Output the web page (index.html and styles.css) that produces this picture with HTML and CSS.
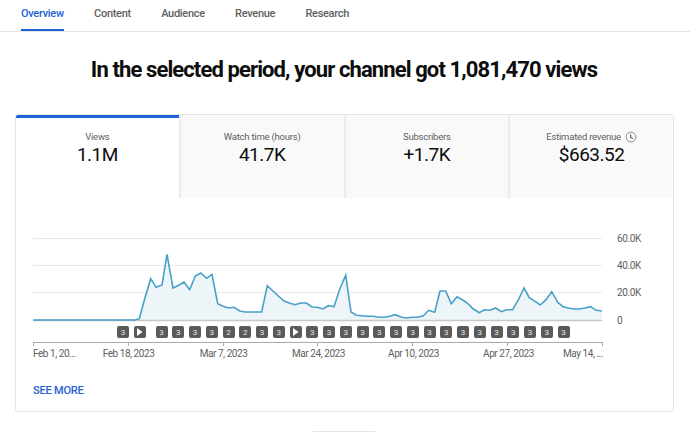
FILE: index.html
```html
<!DOCTYPE html>
<html lang="en">
<head>
  <meta charset="UTF-8" />
  <title>Channel analytics</title>
  <link rel="stylesheet" href="styles.css">
</head>
<body>
  <nav class="top-tabs">
    <a class="top-tab active">Overview</a>
    <a class="top-tab">Content</a>
    <a class="top-tab">Audience</a>
    <a class="top-tab">Revenue</a>
    <a class="top-tab">Research</a>
  </nav>

  <h1 class="headline">In the selected period, your channel got 1,081,470 views</h1>

  <section class="card">
    <div class="metrics">
      <div class="metric active">
        <div class="metric-label">Views</div>
        <div class="metric-value">1.1M</div>
      </div>
      <div class="metric">
        <div class="metric-label">Watch time (hours)</div>
        <div class="metric-value">41.7K</div>
      </div>
      <div class="metric">
        <div class="metric-label">Subscribers</div>
        <div class="metric-value">+1.7K</div>
      </div>
      <div class="metric">
        <div class="metric-label">Estimated revenue
          <svg class="clock" width="12" height="12" viewBox="0 0 12 12">
            <circle cx="6" cy="6" r="4.9" fill="none" stroke="#909090" stroke-width="1"/>
            <path d="M5.6 3.2V6.3L7.8 7.9" fill="none" stroke="#606060" stroke-width="1.1"/>
          </svg>
        </div>
        <div class="metric-value">$663.52</div>
      </div>
    </div>

    <div class="chart">
      <svg class="plot" width="625" height="93" viewBox="33 232 625 93">
        <path class="grid" d="M33 238.5H602M33 265.5H602M33 292.5H602"/>
        <path class="area" d="M33.3 320L135 320 139.3 318.7 145 297.7 150.7 278.7 156 287.3 162 285 167 254.3 173 288 178.7 285.3 184 282 189.7 289.7 195.3 276 200.7 273 206.7 278.3 212 274.3 217.7 303.7 223 306.3 228.7 308 234 307.3 239.7 311 245.3 312 261.7 312 267.3 285.7 273 291 278.3 296 284 301 289.3 303 295 304.7 300.7 303 306.3 303 312 307 317.3 307.3 323 309 328.3 305.7 334 306.7 339.7 289.3 345.7 275.3 351 312 356.3 315.3 362 315.7 367.7 316.3 373.3 316.3 379 317.3 384.3 317.3 389.7 316.3 395 314.7 401 317 406.3 318 412 317.3 417.7 317.3 423.3 315.7 428.7 310.3 434.7 312.3 440 291 445.7 291 451.3 303.7 457 296.7 462.7 300 467.3 303 473.3 309 479.3 312.7 484.3 309.7 490 310.3 495.7 308 501.3 311.7 506.7 309.7 512.7 309.7 518.3 300 524 288 529.3 297.7 535 301.3 540.3 305 546 299.7 551.7 291.7 557.7 302.3 563 306.7 568.3 308 574 309 579.3 309 585 308 590.7 306.7 596 310.3 602 311V320Z"/>
        <path class="baseline" d="M33 320.5H602"/>
        <path class="line" d="M33.3 320L135 320 139.3 318.7 145 297.7 150.7 278.7 156 287.3 162 285 167 254.3 173 288 178.7 285.3 184 282 189.7 289.7 195.3 276 200.7 273 206.7 278.3 212 274.3 217.7 303.7 223 306.3 228.7 308 234 307.3 239.7 311 245.3 312 261.7 312 267.3 285.7 273 291 278.3 296 284 301 289.3 303 295 304.7 300.7 303 306.3 303 312 307 317.3 307.3 323 309 328.3 305.7 334 306.7 339.7 289.3 345.7 275.3 351 312 356.3 315.3 362 315.7 367.7 316.3 373.3 316.3 379 317.3 384.3 317.3 389.7 316.3 395 314.7 401 317 406.3 318 412 317.3 417.7 317.3 423.3 315.7 428.7 310.3 434.7 312.3 440 291 445.7 291 451.3 303.7 457 296.7 462.7 300 467.3 303 473.3 309 479.3 312.7 484.3 309.7 490 310.3 495.7 308 501.3 311.7 506.7 309.7 512.7 309.7 518.3 300 524 288 529.3 297.7 535 301.3 540.3 305 546 299.7 551.7 291.7 557.7 302.3 563 306.7 568.3 308 574 309 579.3 309 585 308 590.7 306.7 596 310.3 602 311"/>
        <text class="y-label" x="617" y="242">60.0K</text>
        <text class="y-label" x="617" y="269">40.0K</text>
        <text class="y-label" x="617" y="296">20.0K</text>
        <text class="y-label" x="617" y="324">0</text>
      </svg>

      <div class="markers">
        <span class="mark">3</span>
        <span class="mark play"><svg width="7" height="8" viewBox="0 0 7 8"><path d="M1 0V8L6.5 4Z" fill="#fff"/></svg></span>
        <span class="mark first">3</span>
        <span class="mark">3</span>
        <span class="mark">3</span>
        <span class="mark">3</span>
        <span class="mark">2</span>
        <span class="mark">2</span>
        <span class="mark">3</span>
        <span class="mark">3</span>
        <span class="mark play"><svg width="7" height="8" viewBox="0 0 7 8"><path d="M1 0V8L6.5 4Z" fill="#fff"/></svg></span>
        <span class="mark">3</span>
        <span class="mark">3</span>
        <span class="mark">3</span>
        <span class="mark">3</span>
        <span class="mark">3</span>
        <span class="mark">3</span>
        <span class="mark">3</span>
        <span class="mark">3</span>
        <span class="mark">3</span>
        <span class="mark">3</span>
        <span class="mark">3</span>
        <span class="mark">3</span>
        <span class="mark">3</span>
        <span class="mark">3</span>
        <span class="mark">3</span>
        <span class="mark">3</span>
      </div>

      <svg class="ticks" width="570" height="5" viewBox="33 342 570 5">
        <path d="M33 342.5H602.5M33.5 342V346M128.5 342V346M223.5 342V346M317.5 342V346M412.5 342V346M507.5 342V346M602.5 342V346"/>
      </svg>
      <div class="dates">
        <span class="date start">Feb 1, 20...</span>
        <span class="date">Feb 18, 2023</span>
        <span class="date">Mar 7, 2023</span>
        <span class="date">Mar 24, 2023</span>
        <span class="date">Apr 10, 2023</span>
        <span class="date">Apr 27, 2023</span>
        <span class="date end">May 14, ...</span>
      </div>

      <a class="see-more">SEE MORE</a>
    </div>
  </section>

  <div class="next-button"></div>
</body>
</html>
```

FILE: styles.css
```css
body {
  margin: 0;
  height: 436px;
  overflow: hidden;
  background: #fff;
  font-family: Roboto, "Liberation Sans", sans-serif;
  color: #0d0d0d;
}

.top-tabs {
  display: flex;
  gap: 30.3px;
  height: 31px;
  padding-left: 21px;
  border-bottom: 1px solid #e5e5e5;
}
.top-tab {
  height: 29px;
  line-height: 27px;
  font-size: 11px;
  font-weight: 500;
  letter-spacing: -0.3px;
  color: #606060;
}
.top-tab.active {
  color: #1c62d6;
  border-bottom: 2px solid #1c62d6;
}

.headline {
  margin: 0;
  padding: 24px 2px 0 0;
  height: 59px;
  line-height: 28px;
  font-size: 22px;
  font-weight: 700;
  letter-spacing: -0.89px;
  text-align: center;
  box-sizing: border-box;
  color: #0d0d0d;
}

.card {
  margin: 23px 16px 0 15px;
  height: 298px;
  box-sizing: border-box;
  border: 1px solid #e5e5e5;
  border-radius: 3px;
  overflow: hidden;
}

.metrics {
  display: flex;
  height: 83px;
}
.metric {
  flex: 1;
  padding-top: 14px;
  box-sizing: border-box;
  text-align: center;
  background: #f9f9f9;
  border-left: 2px solid #ececec;
}
.metric:first-child {
  border-left: none;
}
.metric.active {
  padding-top: 11px;
  background: #fff;
  border-top: 3px solid #1c62d6;
}
.metric-label {
  height: 14px;
  line-height: 15px;
  font-size: 9.5px;
  letter-spacing: -0.22px;
  color: #606060;
}
.metric-value {
  margin-top: 2px;
  line-height: 20px;
  font-size: 19px;
  letter-spacing: -0.5px;
  color: #0d0d0d;
}
.clock {
  margin-left: 2px;
  vertical-align: -3px;
}

.chart {
  padding: 34px 0 0 17px;
}
.plot {
  display: block;
}
.grid {
  fill: none;
  stroke: #e9e9e9;
  stroke-width: 1;
}
.area {
  fill: #eef5f9;
}
.baseline {
  fill: none;
  stroke: #c8c8c8;
  stroke-width: 1.5;
}
.line {
  fill: none;
  stroke: #48a0c9;
  stroke-width: 1.6;
}
.y-label {
  font-size: 10px;
  letter-spacing: -0.4px;
  fill: #606060;
}

.markers {
  display: flex;
  gap: 4.75px;
  height: 12px;
  margin: 1px 0 0 84px;
}
.mark {
  display: flex;
  align-items: center;
  justify-content: center;
  flex: none;
  width: 12px;
  height: 12px;
  border-radius: 2px;
  background: #5a5a5a;
  color: #e8e8e8;
  font-size: 8px;
}
.mark.first {
  margin-left: 5px;
}

.ticks {
  display: block;
  margin-top: 4px;
}
.ticks path {
  fill: none;
  stroke: #aaa;
  stroke-width: 1;
}

.dates {
  display: grid;
  grid-template-columns: 48px repeat(5, 95px) 47px;
  width: 570px;
  font-size: 10px;
  letter-spacing: -0.45px;
  line-height: 14px;
  color: #606060;
  white-space: nowrap;
}
.date {
  justify-self: center;
}
.date.start {
  justify-self: start;
}
.date.end {
  justify-self: end;
}

.see-more {
  display: block;
  margin-top: 22px;
  line-height: 16px;
  font-size: 11px;
  font-weight: 500;
  letter-spacing: -0.2px;
  color: #1c62d6;
}

.next-button {
  width: 62px;
  height: 5px;
  margin: 19px 0 0 313px;
  border-top: 1px solid #e5e5e5;
}
```
